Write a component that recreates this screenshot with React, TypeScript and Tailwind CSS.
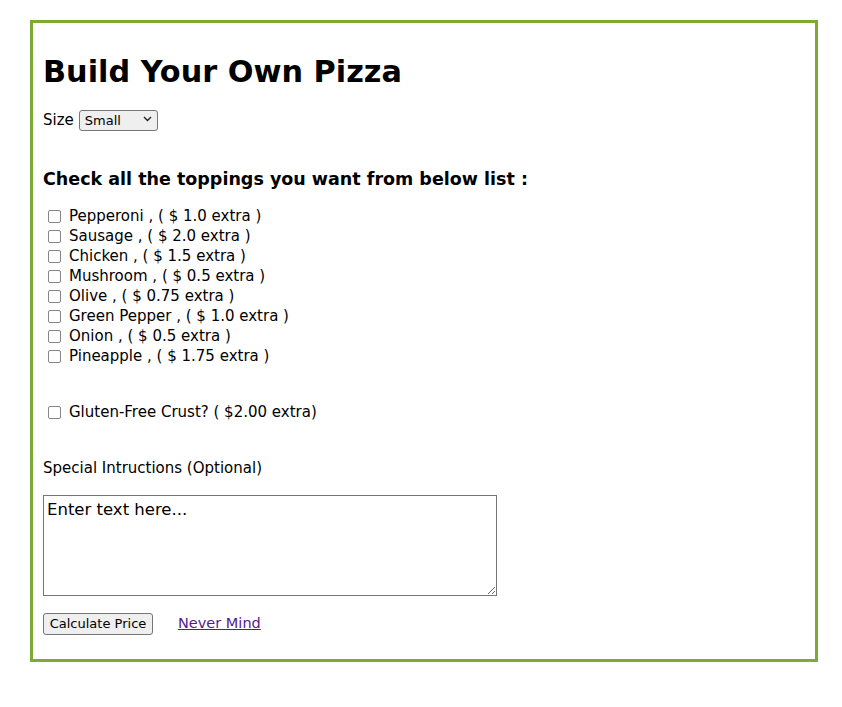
import React, { useState } from 'react';

const toppings = [
  { name: 'Pepperoni', price: '1.0' },
  { name: 'Sausage', price: '2.0' },
  { name: 'Chicken', price: '1.5' },
  { name: 'Mushroom', price: '0.5' },
  { name: 'Olive', price: '0.75' },
  { name: 'Green Pepper', price: '1.0' },
  { name: 'Onion', price: '0.5' },
  { name: 'Pineapple', price: '1.75' },
];

function Checkbox() {
  return (
    <input
      type="checkbox"
      className="appearance-none w-[13px] h-[13px] border border-[#858585] rounded-[2px] bg-white m-0 shrink-0"
    />
  );
}

export default function App() {
  const [notes, setNotes] = useState('Enter text here...');

  return (
    <div className="bg-white min-h-[707px] pt-[20px] pl-[30px] text-black" style={{ fontFamily: '"DejaVu Sans", Verdana, sans-serif' }}>
      <div className="w-[788px] border-[3px] border-[#7aab35] pt-[30px] pb-[24px] px-[10px]">
        {/* Header */}
        <h1 className="text-[30.3px] leading-[38px] font-bold">Build Your Own Pizza</h1>

        <div className="mt-[19px] h-[21px] flex items-center gap-[5px] text-[15px]">
          <span>Size</span>
          <div className="relative">
            <select className="appearance-none w-[79px] h-[21px] border border-[#767676] rounded-[3px] bg-[#efefef] pl-[5px] text-[13px] leading-[19px]">
              <option>Small</option>
              <option>Medium</option>
              <option>Large</option>
            </select>
            <svg className="absolute right-[6px] top-[7px] pointer-events-none" width="9" height="6" viewBox="0 0 9 6">
              <path d="M1 1 L4.5 4.5 L8 1" fill="none" stroke="#222" strokeWidth="1.4" />
            </svg>
          </div>
        </div>

        <h2 className="mt-[37px] text-[17.5px] leading-[22px] font-bold">Check all the toppings you want from below list :</h2>

        {/* Toppings */}
        <div className="mt-[16px] flex flex-col text-[15px]">
          {toppings.map((t) => (
            <label key={t.name} className="h-[20px] flex items-center gap-[8px] pl-[5px]">
              <Checkbox />
              <span>{t.name} , ( $ {t.price} extra )</span>
            </label>
          ))}
        </div>

        <label className="mt-[36px] h-[20px] flex items-center gap-[8px] pl-[5px] text-[15px]">
          <Checkbox />
          <span>Gluten-Free Crust? ( $2.00 extra)</span>
        </label>

        <div className="mt-[36px] h-[20px] flex items-center text-[15px]">Special Intructions (Optional)</div>

        <textarea
          value={notes}
          onChange={(e) => setNotes(e.target.value)}
          className="block mt-[17px] w-[454px] h-[101px] border border-[#767676] px-[3px] pt-[3px] text-[16.5px] leading-[21px] bg-white"
        />

        <div className="mt-[16px] h-[23px] flex items-center gap-[25px]">
          <button className="h-[22px] w-[110px] border border-[#767676] rounded-[3px] bg-[#efefef] text-[13px] leading-[20px]">
            Calculate Price
          </button>
          <a href="#" className="text-[14.5px] text-[#551a8b] underline">Never Mind</a>
        </div>
      </div>
    </div>
  );
}
